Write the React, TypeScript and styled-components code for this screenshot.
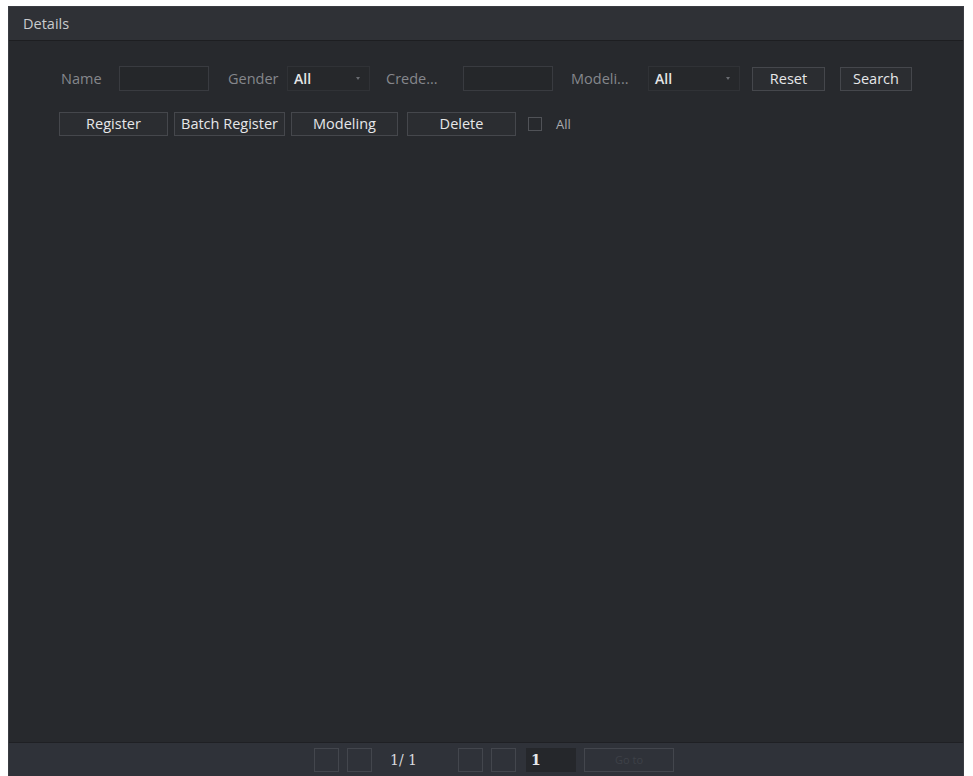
import React from "react";
import styled, { createGlobalStyle } from "styled-components";

const Global = createGlobalStyle`
  html, body { margin: 0; padding: 0; background: #ffffff; }
  body { font-family: "Open Sans", "Noto Sans", sans-serif; }
  #root { height: 776px; }
`;

const Frame = styled.div`
  box-sizing: border-box;
  height: 776px;
  padding: 6px 9px 0 8px;
  display: flex;
`;

const Panel = styled.div`
  flex: 1;
  display: flex;
  flex-direction: column;
  background: #27292d;
  border: 1px solid #3a3c42;
  border-bottom: none;
`;

const Header = styled.div`
  height: 33px;
  display: flex;
  align-items: center;
  padding-left: 14px;
  background: #2f3136;
  border-bottom: 1px solid #1d1e21;
  color: #c9cbce;
  font-size: 14.5px;
`;

const Body = styled.div`
  flex: 1;
  padding: 25px 0 0 52px;
  display: flex;
  flex-direction: column;
  gap: 20px;
`;

const Row = styled.div`
  display: flex;
  align-items: center;
  height: 25px;
`;

const Label = styled.span<{ $w: number; $ml?: number }>`
  width: ${(p) => p.$w}px;
  margin-left: ${(p) => p.$ml ?? 0}px;
  color: #85878c;
  font-size: 14.5px;
  white-space: nowrap;
`;

const Field = styled.div<{ $w: number; $ml?: number }>`
  box-sizing: border-box;
  width: ${(p) => p.$w}px;
  height: 25px;
  margin-left: ${(p) => p.$ml ?? 0}px;
  border: 1px solid #393b40;
  background: #25272a;
`;

const Select = styled.div<{ $w: number; $ml?: number }>`
  box-sizing: border-box;
  width: ${(p) => p.$w}px;
  height: 25px;
  margin-left: ${(p) => p.$ml ?? 0}px;
  border: 1px solid #303236;
  background: #26282b;
  display: flex;
  align-items: center;
  justify-content: space-between;
  padding: 0 9px 0 6px;
  color: #e4e5e7;
  font-size: 14px;
  font-weight: 600;
`;

const Caret = styled.span`
  width: 0;
  height: 0;
  border-left: 2.5px solid transparent;
  border-right: 2.5px solid transparent;
  border-top: 3px solid #6a6c71;
`;

const Button = styled.div<{ $w: number; $ml?: number }>`
  box-sizing: border-box;
  width: ${(p) => p.$w}px;
  height: 24px;
  margin-left: ${(p) => p.$ml ?? 0}px;
  border: 1px solid #45474c;
  background: #2b2d31;
  display: flex;
  align-items: center;
  justify-content: center;
  color: #e6e7e9;
  font-size: 14.5px;
  white-space: nowrap;
`;

const Check = styled.span`
  box-sizing: border-box;
  width: 14px;
  height: 14px;
  margin-left: 12px;
  border: 1px solid #505257;
`;

const CheckLabel = styled.span`
  margin-left: 14px;
  color: #a9abaf;
  font-size: 13px;
`;

const Footer = styled.div`
  height: 33px;
  background: #2f3239;
  border-top: 1px solid #1f2024;
  display: flex;
  align-items: center;
  justify-content: center;
  padding-left: 16px;
`;

const PageBtn = styled.div<{ $ml?: number }>`
  box-sizing: border-box;
  width: 25px;
  height: 24px;
  margin-left: ${(p) => p.$ml ?? 0}px;
  border: 1px solid #43464d;
  background: #2f3239;
`;

const PageText = styled.span`
  margin-left: 18px;
  width: 50px;
  color: #d9dade;
  font-size: 14px;
  font-family: "DejaVu Serif", serif;
  white-space: pre;
`;

const PageInput = styled.div`
  box-sizing: border-box;
  width: 50px;
  height: 24px;
  margin-left: 10px;
  background: #25272b;
  color: #e6e7ea;
  font-size: 14px;
  font-family: "DejaVu Serif", serif;
  font-weight: bold;
  display: flex;
  align-items: center;
  padding-left: 5px;
`;

const GoBtn = styled.div`
  box-sizing: border-box;
  width: 90px;
  height: 24px;
  margin-left: 8px;
  border: 1px solid #43464d;
  color: #3e4148;
  font-size: 11px;
  display: flex;
  align-items: center;
  justify-content: center;
`;

export default function App() {
  return (
    <>
      <Global />
      <Frame>
        <Panel>
          <Header>Details</Header>
          <Body>
            <Row>
              <Label $w={58}>Name</Label>
              <Field $w={90} />
              <Label $w={58} $ml={19}>Gender</Label>
              <Select $w={83} $ml={1}>
                All
                <Caret />
              </Select>
              <Label $w={60} $ml={16}>Crede...</Label>
              <Field $w={90} $ml={17} />
              <Label $w={60} $ml={18}>Modeli...</Label>
              <Select $w={92} $ml={17}>
                All
                <Caret />
              </Select>
              <Button $w={73} $ml={12}>Reset</Button>
              <Button $w={72} $ml={15}>Search</Button>
            </Row>
            <Row>
              <Button $w={109} $ml={-2}>Register</Button>
              <Button $w={111} $ml={6}>Batch Register</Button>
              <Button $w={107} $ml={6}>Modeling</Button>
              <Button $w={109} $ml={9}>Delete</Button>
              <Check />
              <CheckLabel>All</CheckLabel>
            </Row>
          </Body>
          <Footer>
            <PageBtn />
            <PageBtn $ml={8} />
            <PageText>{"1/ 1"}</PageText>
            <PageBtn $ml={18} />
            <PageBtn $ml={8} />
            <PageInput>1</PageInput>
            <GoBtn>Go to</GoBtn>
          </Footer>
        </Panel>
      </Frame>
    </>
  );
}
